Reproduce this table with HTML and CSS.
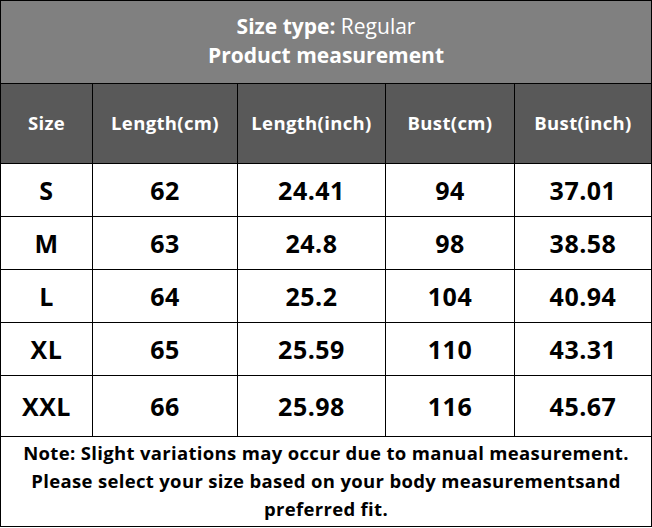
FILE: index.html
```html
<!DOCTYPE html>
<html>
<head>
<meta charset="utf-8">
<link rel="stylesheet" href="styles.css">
</head>
<body>
<div class="chart">
  <div class="title">
    <div><b>Size type:</b> Regular</div>
    <div><b>Product measurement</b></div>
  </div>
  <div class="hd">Size</div>
  <div class="hd">Length(cm)</div>
  <div class="hd">Length(inch)</div>
  <div class="hd">Bust(cm)</div>
  <div class="hd">Bust(inch)</div>

  <div class="cell">S</div><div class="cell">62</div><div class="cell">24.41</div><div class="cell">94</div><div class="cell">37.01</div>
  <div class="cell">M</div><div class="cell">63</div><div class="cell">24.8</div><div class="cell">98</div><div class="cell">38.58</div>
  <div class="cell">L</div><div class="cell">64</div><div class="cell">25.2</div><div class="cell">104</div><div class="cell">40.94</div>
  <div class="cell">XL</div><div class="cell">65</div><div class="cell">25.59</div><div class="cell">110</div><div class="cell">43.31</div>
  <div class="cell">XXL</div><div class="cell">66</div><div class="cell">25.98</div><div class="cell">116</div><div class="cell">45.67</div>

  <div class="note">Note: Slight variations may occur due to manual measurement.<br>Please select your size based on your body measurementsand<br>preferred fit.</div>
</div>
</body>
</html>
```
FILE: styles.css
```css
* { box-sizing: border-box; }
html, body { margin: 0; padding: 0; background: #fff; }
body { font-family: "Open Sans", "Noto Sans", sans-serif; }
.chart {
  width: 652px;
  display: grid;
  grid-template-columns: 92px 145px 148px 129px 137px;
  grid-template-rows: 83px 80px 53px 53px 53px 53px 61px 90px;
  border-left: 1px solid #000;
  border-top: 1px solid #000;
}
.chart > div {
  border-right: 1px solid #000;
  border-bottom: 1px solid #000;
  display: flex;
  align-items: center;
  justify-content: center;
  text-align: center;
}
.title {
  grid-column: 1 / -1;
  background: #808080;
  color: #fff;
  flex-direction: column;
  font-size: 21px;
  line-height: 29px;
  font-weight: 400;
  padding-bottom: 2px;
}
.title b { font-weight: 700; }
.hd {
  background: #595959;
  color: #fff;
  font-weight: 700;
  font-size: 18.5px;
  letter-spacing: 0.35px;
  padding-bottom: 3px;
}
.cell {
  font-weight: 700;
  font-size: 25px;
  letter-spacing: 0.5px;
  color: #000;
  padding-bottom: 1px;
}
.note {
  grid-column: 1 / -1;
  font-weight: 700;
  font-size: 18.5px;
  letter-spacing: 0.33px;
  line-height: 28px;
  color: #000;
  padding-bottom: 2px;
}
```
